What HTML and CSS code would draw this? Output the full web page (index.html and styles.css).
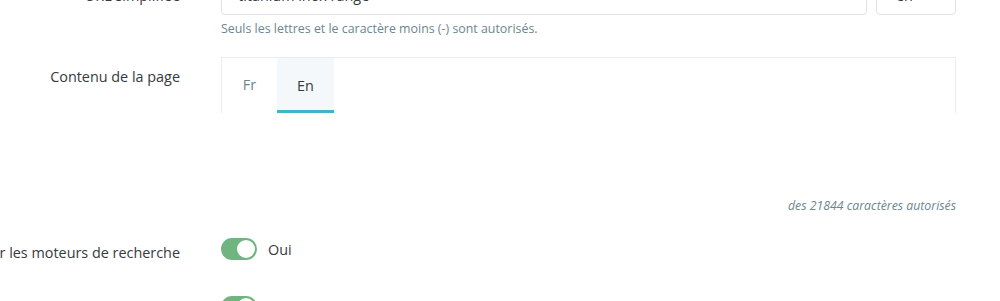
FILE: index.html
```html
<!DOCTYPE html>
<html lang="fr">
<head>
<meta charset="utf-8">
<title>Page CMS</title>
<link rel="stylesheet" href="styles.css">
</head>
<body>
<div class="form">
  <div class="row row-url">
    <div class="label">URL simplifiée</div>
    <div class="field">
      <div class="input-group">
        <div class="input">titanium inox range</div>
        <div class="select">en <span class="caret"></span></div>
      </div>
      <div class="help">Seuls les lettres et le caractère moins (-) sont autorisés.</div>
    </div>
  </div>

  <div class="row row-content">
    <div class="label label-content">Contenu de la page</div>
    <div class="field">
      <div class="tabs">
        <div class="tab">Fr</div>
        <div class="tab active">En</div>
      </div>
      <div class="editor-space"></div>
      <div class="counter">des 21844 caractères autorisés</div>
    </div>
  </div>

  <div class="row row-switch">
    <div class="label label-switch">Indexation par les moteurs de recherche</div>
    <div class="field switch-field">
      <span class="switch"><span class="knob"></span></span>
      <span class="switch-text">Oui</span>
    </div>
  </div>

  <div class="row row-switch2">
    <div class="label label-switch2">Affiché</div>
    <div class="field switch-field">
      <span class="switch"><span class="knob"></span></span>
      <span class="switch-text">Oui</span>
    </div>
  </div>
</div>
</body>
</html>
```

FILE: styles.css
```css
html, body {
  margin: 0;
  padding: 0;
  background: #ffffff;
  overflow: hidden;
}

body {
  font-family: "Open Sans", "Noto Sans", sans-serif;
  color: #363a41;
  font-size: 14.4px;
  width: 1000px;
  height: 301px;
}

.form {
  display: flex;
  flex-direction: column;
}

.row {
  display: flex;
  align-items: flex-start;
}

.label {
  width: 180px;
  flex: 0 0 180px;
  display: flex;
  justify-content: flex-end;
  white-space: nowrap;
  line-height: 20px;
  font-size: 14.4px;
  color: #363a41;
}

.field {
  margin-left: 41px;
  width: 735px;
  flex: 0 0 735px;
}

/* URL row */
.row-url {
  margin-top: -23px;
}

.row-url .label {
  padding-top: 9px;
}

.input-group {
  display: flex;
  gap: 9px;
}

.input {
  box-sizing: border-box;
  width: 646px;
  height: 38px;
  border: 1px solid #dfe2e5;
  border-radius: 4px;
  padding: 0 16px;
  line-height: 36px;
  font-size: 14.4px;
  color: #363a41;
}

.select {
  box-sizing: border-box;
  width: 80px;
  height: 38px;
  border: 1px solid #dfe2e5;
  border-radius: 4px;
  padding: 0 0 0 19px;
  line-height: 36px;
  font-size: 14.4px;
  color: #363a41;
  display: flex;
  align-items: center;
  gap: 22px;
}

.caret {
  width: 0;
  height: 0;
  border-left: 4px solid transparent;
  border-right: 4px solid transparent;
  border-top: 5px solid #6c868e;
}

.help {
  margin-top: 6px;
  font-size: 12.4px;
  line-height: 16px;
  color: #6c868e;
}

/* Content row */
.row-content {
  margin-top: 20px;
}

.label-content {
  padding-top: 10px;
}

.tabs {
  box-sizing: border-box;
  height: 56px;
  border: 1px solid #eaedef;
  border-bottom: none;
  display: flex;
}

.tab {
  box-sizing: border-box;
  height: 55px;
  width: 55px;
  text-align: center;
  line-height: 54px;
  font-size: 14.4px;
  color: #6c868e;
}

.tab.active {
  background: #f4f8fa;
  color: #363a41;
  border-bottom: 3px solid #3fb6c8;
  line-height: 56px;
  width: 57px;
}

.editor-space {
  height: 84px;
}

.counter {
  text-align: right;
  font-size: 12.3px;
  font-style: italic;
  line-height: 16px;
  color: #6c868e;
  padding-top: 1px;
}

/* Switch rows */
.row-switch {
  margin-top: 24px;
}

.label-switch {
  padding-top: 5px;
}

.switch-field {
  display: flex;
  align-items: center;
  gap: 11px;
  height: 22px;
}

.switch {
  box-sizing: border-box;
  width: 36px;
  height: 22px;
  border-radius: 11px;
  background: #70b580;
  display: flex;
  align-items: center;
  justify-content: flex-end;
  padding-right: 2px;
}

.knob {
  width: 18px;
  height: 18px;
  border-radius: 50%;
  background: #ffffff;
}

.switch-text {
  font-size: 14.4px;
  line-height: 20px;
  color: #363a41;
  padding-top: 2px;
}

.row-switch2 {
  margin-top: 33px;
}

.label-switch2 {
  padding-top: 9px;
}
```
